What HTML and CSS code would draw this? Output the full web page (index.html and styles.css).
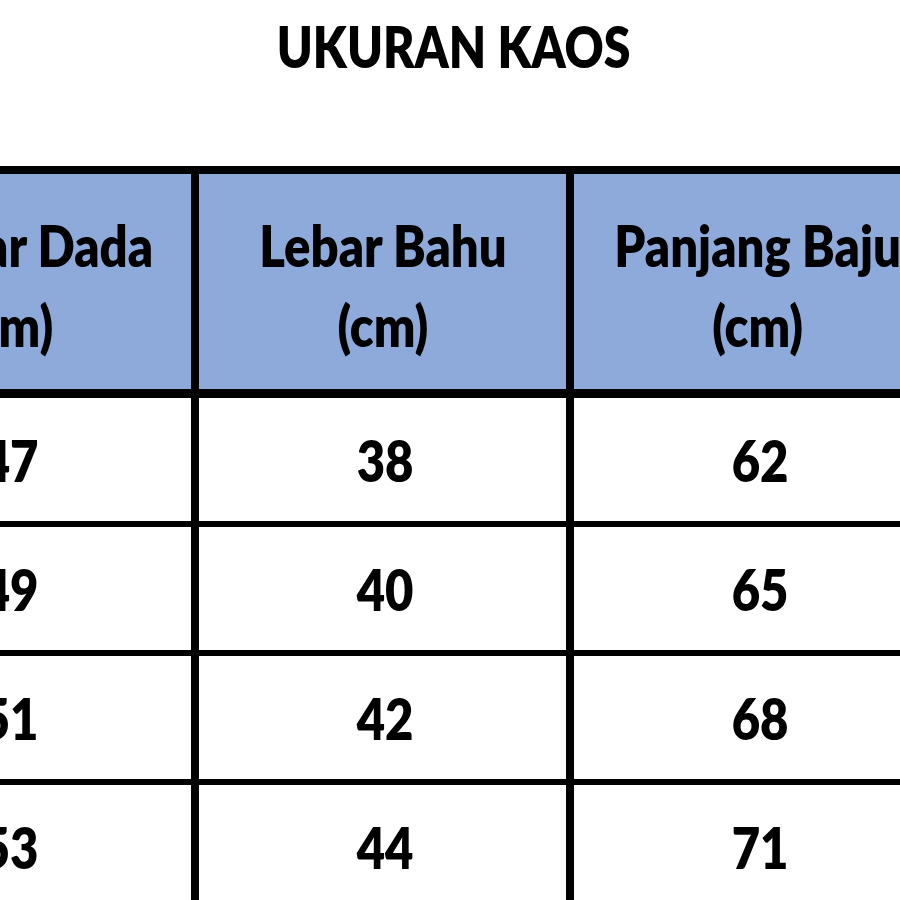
FILE: index.html
```html
<!DOCTYPE html>
<html lang="id">
<head>
<meta charset="utf-8">
<title>Ukuran Kaos</title>
<link rel="stylesheet" href="styles.css">
</head>
<body>
<div class="page">
  <h1 class="title"><span class="t">UKURAN KAOS</span></h1>
  <div class="sheet">
    <div class="grid">
      <div class="row head">
        <div class="cell"><span class="t">Lingkar Dada<br>(cm)</span></div>
        <div class="cell"><span class="t">Lebar Bahu<br>(cm)</span></div>
        <div class="cell"><span class="t">Panjang Baju<br>(cm)</span></div>
      </div>
      <div class="row">
        <div class="cell"><span class="t">47</span></div>
        <div class="cell"><span class="t">38</span></div>
        <div class="cell"><span class="t">62</span></div>
      </div>
      <div class="row">
        <div class="cell"><span class="t">49</span></div>
        <div class="cell"><span class="t">40</span></div>
        <div class="cell"><span class="t">65</span></div>
      </div>
      <div class="row">
        <div class="cell"><span class="t">51</span></div>
        <div class="cell"><span class="t">42</span></div>
        <div class="cell"><span class="t">68</span></div>
      </div>
      <div class="row">
        <div class="cell"><span class="t">53</span></div>
        <div class="cell"><span class="t">44</span></div>
        <div class="cell"><span class="t">71</span></div>
      </div>
    </div>
  </div>
</div>
</body>
</html>
```

FILE: styles.css
```css
html, body {
  margin: 0;
  padding: 0;
  overflow: hidden;
  background: #ffffff;
}

.page {
  width: 900px;
  font-family: Lato, "Open Sans", sans-serif;
  font-weight: 800;
  color: #000000;
}

.t {
  display: inline-block;
  transform: scaleX(0.86);
  transform-origin: center;
}

.title {
  margin: 0 0 73px 0;
  font-size: 56px;
  line-height: 93px;
  font-weight: 800;
  text-align: center;
  padding-left: 8px;
}

.sheet {
  width: 900px;
  overflow: hidden;
}

.grid {
  margin-left: -184px;
  width: max-content;
  border-top: 8px solid #000;
  border-left: 8px solid #000;
}

.row {
  display: flex;
  height: 123px;
  border-bottom: 6px solid #000;
  font-size: 57px;
  line-height: 80px;
}

.row.head {
  height: 215px;
  border-bottom-width: 9px;
  background: #8eaadb;
}

.cell {
  width: 367px;
  flex: none;
  box-sizing: border-box;
  border-right: 8px solid #000;
  display: flex;
  align-items: center;
  justify-content: center;
  text-align: center;
}

.head .cell {
  width: 375px;
  padding-top: 6px;
}

.row:not(.head) .cell {
  width: 375px;
  padding-left: 6px;
}
```
